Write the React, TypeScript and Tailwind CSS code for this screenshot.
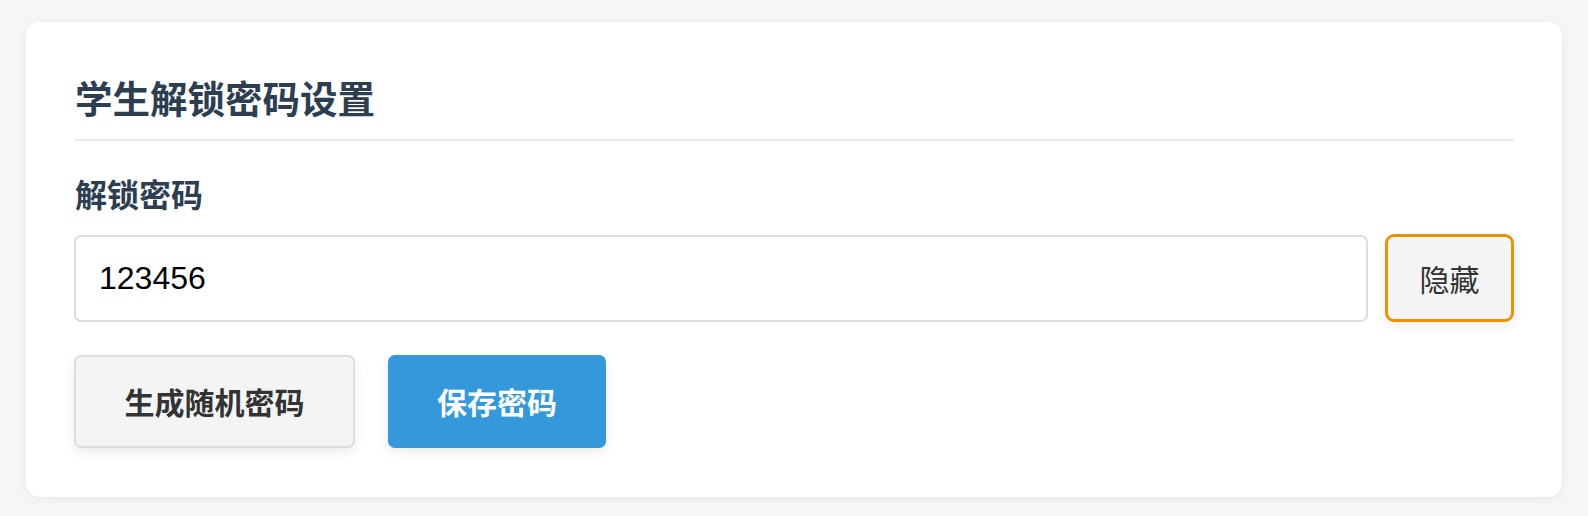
function App() {
  return (
    <div className="min-h-screen bg-[#f5f6f8] px-[26px] pt-[22px] pb-[22px] font-['Noto_Sans_CJK_SC',sans-serif]">
      <div className="rounded-[14px] bg-white px-[48px] pt-[53px] pb-[49px] shadow-[0_2px_12px_rgba(0,0,0,0.06)]">
        <h2 className="border-b-2 border-[#ececec] pb-[20px] pl-px text-[37.5px] font-bold leading-[44px] text-[#2c3e50]">
          学生解锁密码设置
        </h2>
        <label className="mt-[32px] block pl-px text-[32px] font-bold leading-[40px] text-[#2c3e50]">
          解锁密码
        </label>
        <div className="mt-[22px] flex gap-[17px]">
          <input
            type="text"
            defaultValue="123456"
            className="h-[87px] flex-1 rounded-[7px] border-2 border-[#dddddd] bg-white px-[23px] font-['Liberation_Sans',Arial,sans-serif] text-[32px] text-black outline-none"
          />
          <button className="h-[88px] w-[129px] -mt-px rounded-[9px] border-[3px] border-[#e69500] bg-[#f4f4f4] text-[30px] text-[#333] shadow-[0_4px_12px_rgba(0,0,0,0.08)]">
            隐藏
          </button>
        </div>
        <div className="mt-[33px] flex gap-[33px]">
          <button className="h-[93px] w-[281px] rounded-[7px] border-2 border-[#dddddd] bg-[#f4f4f4] text-[30px] font-bold text-[#333] shadow-[0_4px_12px_rgba(0,0,0,0.08)]">
            生成随机密码
          </button>
          <button className="h-[93px] w-[218px] rounded-[7px] bg-[#3498db] text-[30px] font-bold text-white shadow-[0_4px_12px_rgba(0,0,0,0.08)]">
            保存密码
          </button>
        </div>
      </div>
    </div>
  );
}

export default App;
